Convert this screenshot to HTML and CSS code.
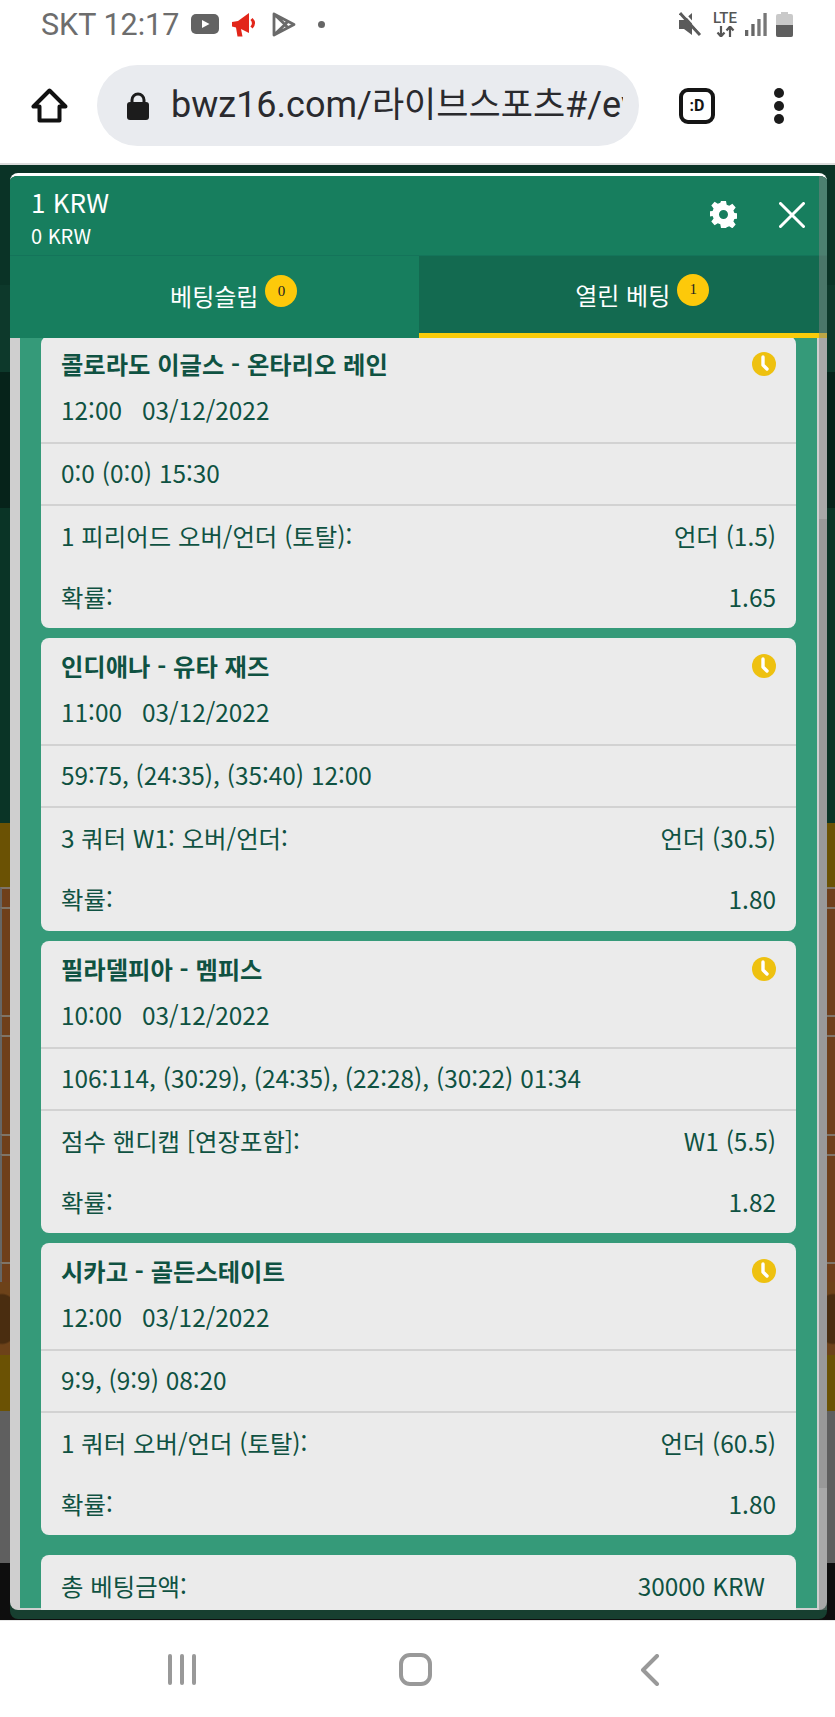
FILE: index.html
```html
<!DOCTYPE html>
<html lang="ko">
<head>
<meta charset="utf-8">
<title>bwz16</title>
<link rel="stylesheet" href="styles.css">
</head>
<body>
<header class="chrome">
  <div class="status">
    <span class="status-text">SKT 12:17</span>
    <svg class="ic-yt" width="28" height="20" viewBox="0 0 28 20"><rect width="28" height="20" rx="5" fill="#636363"/><path d="M11 6l7.500 4-7.500 4z" fill="#fff"/></svg>
    <svg class="ic-mega" width="25" height="24" viewBox="0 0 25 24"><path d="M0 9l6-1L17 0v20l-8-4 1.500 7.500H5.500L4 14.500 0 13.500z" fill="#e2261a"/><path d="M19.500 6q4 4 0 8.500" fill="none" stroke="#e2261a" stroke-width="3"/></svg>
    <svg class="ic-play" width="24" height="25" viewBox="0 0 24 25"><path d="M2 2l20 10.500L2 23zM2 2l11 10.500L2 23M16.500 8.500l-3.500 4 3.500 4" fill="none" stroke="#6a6a6a" stroke-width="2.800" stroke-linejoin="round"/></svg>
    <span class="dot"></span>
    <svg class="ic-mute" width="23" height="24" viewBox="0 0 23 24"><path d="M0 8h5l8-7v22l-8-6H0z" fill="#5a5a5a"/><path d="M1 1l20 22" stroke="#5a5a5a" stroke-width="3"/><path d="M4 0l19 21" stroke="#fff" stroke-width="2"/></svg>
    <span class="lte"><span class="lte-word">LTE</span><svg width="21" height="11" viewBox="0 0 21 11"><path d="M6 0v10M2.500 6.500L6 10.500l3.500-4M15 11V1M11.500 4.500L15 .5l3.500 4" fill="none" stroke="#555" stroke-width="2.200"/></svg></span>
    <svg class="ic-signal" width="22" height="23" viewBox="0 0 22 23"><rect x="0" y="17" width="3.300" height="6" fill="#666"/><rect x="6.300" y="11" width="3.300" height="12" fill="#666"/><rect x="12.300" y="6" width="3.300" height="17" fill="#777"/><rect x="18.400" y="0" width="3.300" height="23" fill="#777"/></svg>
    <svg class="ic-batt" width="17" height="25" viewBox="0 0 17 25"><path d="M5 0h7v2h3q2 0 2 2v19q0 2-2 2H2q-2 0-2-2V4q0-2 2-2h3z" fill="#c9c9c9"/><path d="M0 13h17v10q0 2-2 2H2q-2 0-2-2z" fill="#5e5e5e"/></svg>
  </div>
  <div class="toolbar">
    <svg class="ic-home" width="37" height="35" viewBox="0 0 37 35"><path d="M18.500 2.500L2.500 18.500h6v14h20v-14h6z" fill="none" stroke="#111" stroke-width="4" stroke-linejoin="round"/></svg>
    <div class="url">
      <svg width="22" height="28" viewBox="0 0 22 28"><path d="M5 12V8a6 6 0 0 1 12 0v4" fill="none" stroke="#1c1c1c" stroke-width="3"/><rect y="10" width="22" height="18" rx="3" fill="#1c1c1c"/></svg>
      <span class="url-text">bwz16.com/<span class="url-ko">라이브스포츠</span>#/ev</span>
    </div>
    <span class="tabs-count">:D</span>
    <span class="kebab"><i></i><i></i><i></i></span>
  </div>
</header>

<main class="stage">
  <div class="backdrop">
    <div class="band b-a"></div>
    <div class="band b-b"></div>
    <div class="band b-c"></div>
    <div class="band b-d"></div>
    <div class="band b-gold"></div>
    <div class="brown-row short"></div>
    <div class="brown-row tall"></div>
    <div class="brown-row short"></div>
    <div class="brown-row mid"></div>
    <div class="brown-row short"></div>
    <div class="brown-row tall"></div>
    <div class="brown-row short"></div>
    <div class="band b-blob"></div>
    <div class="band b-gold2"></div>
    <div class="band b-gray"></div>
    <div class="band b-black"></div>
  </div>

  <section class="panel">
    <div class="panel-head">
      <div class="amounts">
        <div class="amount-main">1 KRW</div>
        <div class="amount-sub">0 KRW</div>
      </div>
      <svg class="ic-gear" width="27" height="27" viewBox="0 0 27 27"><path fill="#fff" fill-rule="evenodd" d="M11 0h5l.7 3.700 2.500 1 3.200-2 3.300 3.700-2.300 3 1 2.500 3.600.6v5l-3.600.6-1 2.500 2.300 3-3.300 3.700-3.200-2-2.500 1L16 27h-5l-.7-3.700-2.500-1-3.200 2-3.300-3.700 2.300-3-1-2.500L-1 15.500v-5l3.600-.6 1-2.500-2.300-3 3.300-3.700 3.200 2 2.500-1zM13.500 9a4.500 4.500 0 1 0 0 9 4.500 4.500 0 0 0 0-9z"/></svg>
      <svg class="ic-close" width="26" height="26" viewBox="0 0 26 26"><path d="M1.500 1.500l23 23M24.500 1.500l-23 23" stroke="#fff" stroke-width="3" stroke-linecap="round"/></svg>
    </div>
    <div class="tabs">
      <div class="tab"><span class="tab-label">베팅슬립<span class="badge">0</span></span></div>
      <div class="tab active"><span class="tab-label">열린 베팅<span class="badge">1</span></span></div>
    </div>
    <div class="scroll">
      <div class="list">
        <article class="card">
          <div class="card-head">
            <div class="title-row"><span class="title">콜로라도 이글스 - 온타리오 레인</span><svg class="clock" width="24" height="24" viewBox="0 0 24 24"><circle cx="12" cy="12" r="12" fill="#eec110"/><path d="M11 5v8l4 4" fill="none" stroke="#fff" stroke-width="3.400" stroke-linecap="round" stroke-linejoin="round"/></svg></div>
            <div class="when"><span>12:00</span><span>03/12/2022</span></div>
          </div>
          <div class="score">0:0 (0:0) 15:30</div>
          <div class="bet">
            <div class="line"><span>1 피리어드 오버/언더 (토탈):</span><span>언더 (1.5)</span></div>
            <div class="line"><span>확률:</span><span>1.65</span></div>
          </div>
        </article>
        <article class="card">
          <div class="card-head">
            <div class="title-row"><span class="title">인디애나 - 유타 재즈</span><svg class="clock" width="24" height="24" viewBox="0 0 24 24"><circle cx="12" cy="12" r="12" fill="#eec110"/><path d="M11 5v8l4 4" fill="none" stroke="#fff" stroke-width="3.400" stroke-linecap="round" stroke-linejoin="round"/></svg></div>
            <div class="when"><span>11:00</span><span>03/12/2022</span></div>
          </div>
          <div class="score">59:75, (24:35), (35:40) 12:00</div>
          <div class="bet">
            <div class="line"><span>3 쿼터 W1: 오버/언더:</span><span>언더 (30.5)</span></div>
            <div class="line"><span>확률:</span><span>1.80</span></div>
          </div>
        </article>
        <article class="card">
          <div class="card-head">
            <div class="title-row"><span class="title">필라델피아 - 멤피스</span><svg class="clock" width="24" height="24" viewBox="0 0 24 24"><circle cx="12" cy="12" r="12" fill="#eec110"/><path d="M11 5v8l4 4" fill="none" stroke="#fff" stroke-width="3.400" stroke-linecap="round" stroke-linejoin="round"/></svg></div>
            <div class="when"><span>10:00</span><span>03/12/2022</span></div>
          </div>
          <div class="score">106:114, (30:29), (24:35), (22:28), (30:22) 01:34</div>
          <div class="bet">
            <div class="line"><span>점수 핸디캡 [연장포함]:</span><span>W1 (5.5)</span></div>
            <div class="line"><span>확률:</span><span>1.82</span></div>
          </div>
        </article>
        <article class="card">
          <div class="card-head">
            <div class="title-row"><span class="title">시카고 - 골든스테이트</span><svg class="clock" width="24" height="24" viewBox="0 0 24 24"><circle cx="12" cy="12" r="12" fill="#eec110"/><path d="M11 5v8l4 4" fill="none" stroke="#fff" stroke-width="3.400" stroke-linecap="round" stroke-linejoin="round"/></svg></div>
            <div class="when"><span>12:00</span><span>03/12/2022</span></div>
          </div>
          <div class="score">9:9, (9:9) 08:20</div>
          <div class="bet">
            <div class="line"><span>1 쿼터 오버/언더 (토탈):</span><span>언더 (60.5)</span></div>
            <div class="line"><span>확률:</span><span>1.80</span></div>
          </div>
        </article>
        <div class="summary">
          <div class="line"><span>총 베팅금액:</span><span>30000 KRW</span></div>
        </div>
      </div>
    </div>
    <div class="scrollbar"><div class="thumb"></div></div>
  </section>
</main>

<footer class="nav">
  <span class="nav-recent"><i></i><i></i><i></i></span>
  <span class="nav-home"></span>
  <svg class="nav-back" width="20" height="32" viewBox="0 0 20 32"><path d="M17 2L3 16l14 14" fill="none" stroke="#999" stroke-width="4" stroke-linecap="round" stroke-linejoin="round"/></svg>
</footer>
</body>
</html>
```
FILE: styles.css
```css
* { box-sizing: border-box; }
html, body { margin: 0; padding: 0; }
body {
  width: 835px;
  height: 1717px;
  overflow: hidden;
  background: #fff;
  font-family: "Noto Sans CJK KR", "Noto Sans", sans-serif;
}

/* browser chrome */
.chrome { height: 165px; background: #fff; border-bottom: 2px solid #dcdcdc; }
.status { height: 65px; display: flex; align-items: flex-start; padding: 12px 42px 0 41px; }
.status-text { font: 400 30.500px/26px Roboto, sans-serif; color: #6d6d6d; width: 137px; white-space: nowrap; }
.ic-yt { margin: 2px 0 0 13px; }
.ic-mega { margin: 1px 0 0 13px; }
.ic-play { margin: 0 0 0 15px; }
.dot { width: 7px; height: 7px; border-radius: 50%; background: #666; margin: 9px 0 0 22px; }
.ic-mute { margin: 0 0 0 auto; }
.lte { width: 24px; margin-left: 11px; display: flex; flex-direction: column; align-items: center; }
.lte-word { font: 500 15px/13px Roboto, sans-serif; color: #555; }
.lte svg { margin-top: 1px; }
.ic-signal { margin: 1px 0 0 8px; }
.ic-batt { margin: 0 0 0 9px; }

.toolbar { height: 81px; display: flex; align-items: center; padding-left: 31px; }
.ic-home { flex: none; margin-top: -1px; }
.url {
  width: 542px; height: 81px; margin-left: 29px; padding: 0 16px 0 30px;
  border-radius: 41px; background: #e9ebef;
  display: flex; align-items: center; gap: 22px;
}
.url svg { flex: none; }
.url-text {
  flex: 1; overflow: hidden; white-space: nowrap;
  font: 400 36px/44px Roboto, "Noto Sans CJK KR", sans-serif; color: #2a2a2e;
}
.url-ko { font-size: 35px; }
.tabs-count {
  width: 36px; height: 36px; margin-left: 40px; border: 4px solid #151515; border-radius: 9px;
  display: flex; align-items: center; justify-content: center;
  font: 700 16px/1 Roboto, sans-serif; color: #151515;
}
.kebab { margin-left: 59px; display: flex; flex-direction: column; gap: 3px; }
.kebab i { width: 10px; height: 10px; border-radius: 50%; background: #1b1b1b; display: block; }

/* page behind the sheet */
.stage { position: relative; height: 1455px; }
.backdrop { height: 100%; display: flex; flex-direction: column; background: #0e0e0e; }
.band { flex: none; }
.b-a { height: 120px; background: #0a3326; }
.b-b { height: 87px; background: #0d392b; }
.b-c { height: 136px; background: #06231a; }
.b-d { height: 315px; background: #0a3426; }
.b-gold { height: 64px; background: #6b5204; }
.brown-row { flex: none; background: #6f3f1b; border-top: 2px solid #7f7468; border-left: 2px solid #666; }
.brown-row.short { height: 20px; }
.brown-row.tall { height: 108px; }
.brown-row.mid { height: 99px; }
.b-blob {
  height: 73px;
  background:
    radial-gradient(ellipse 18px 26px at 2px 37px, #4a2d10 92%, transparent),
    radial-gradient(ellipse 18px 26px at 833px 37px, #4a2d10 92%, transparent),
    #6d4219;
}
.b-gold2 { height: 56px; background: #6b5204; }
.b-gray { height: 152px; background: #5f5f5f; }
.b-black { height: 55px; background: #0e0e0e; }

/* bet sheet */
.panel {
  position: absolute; left: 10px; top: 8px; width: 817px; height: 1446px;
  display: flex; flex-direction: column; overflow: hidden;
  background: #173f30; border-top: 3px solid #fff;
  border-radius: 8px;
}
.panel-head {
  height: 80px; flex: none; display: flex; align-items: center;
  background: #177e5e; border-bottom: 1px solid #14745a; padding-left: 21px; position: relative;
  color: #fff;
}
.amounts { flex: 1; }
.amount-main { font-size: 26px; line-height: 32px; margin-top: 4px; }
.amount-sub { font-size: 20px; line-height: 28px; margin-top: 4px; }
.ic-gear { flex: none; margin: -2px 0 0; }
.ic-close { flex: none; margin: -2px 22px 0 42px; }

.tabs { height: 82px; flex: none; display: flex; }
.tab {
  width: 50%; background: #177e5e; color: #fff;
  display: flex; align-items: center; justify-content: center;
  font-size: 24px; line-height: 30px; padding-bottom: 2px;
}
.tab.active { background: #136a50; border-bottom: 5px solid #f9cc0b; padding-bottom: 0; }
.tab-label { position: relative; }
.badge {
  position: absolute; left: calc(100% + 7px); top: -6px;
  width: 32px; height: 32px; border-radius: 50%; background: #fdc90a;
  display: flex; align-items: center; justify-content: center;
  font: 400 15px/1 "Liberation Serif", serif; color: #222;
}

.scroll {
  height: 1272px; flex: none; overflow: hidden;
  background: #cfcfcf; padding: 0 10px;
  border-radius: 0 0 8px 8px;
}
.list { height: 100%; background: #359a79; padding: 0 21px; }
.card {
  height: 292.3px; margin-bottom: 10px; border-radius: 8px; background: #ebebeb;
  color: #0f5242; font-size: 24.400px; line-height: 30px;
}
.card:first-child { margin-top: -2px; }
.card-head { height: 106px; padding: 13px 20px 0; }
.title-row { display: flex; justify-content: space-between; align-items: center; }
.title { font-weight: 700; font-size: 24.300px; }
.clock { flex: none; }
.when { margin-top: 16px; display: flex; gap: 20px; }
.score { height: 64px; padding: 14px 20px 0; border-top: 2px solid #d2d2d2; border-bottom: 2px solid #d2d2d2; white-space: nowrap; }
.bet { padding: 15px 20px 0; display: flex; flex-direction: column; gap: 31px; }
.line { display: flex; justify-content: space-between; white-space: nowrap; }
.summary {
  height: 120px; margin-top: 20px; padding: 16px 31px 0 20px; border-radius: 8px; background: #ebebeb;
  color: #0f5242; font-size: 24.400px; line-height: 30px;
}

.scrollbar {
  position: absolute; right: 0; top: 0; width: 8px; height: 1434px;
  background: rgba(130, 130, 130, .5);
}
.thumb { position: absolute; left: 0; top: 343px; width: 100%; height: 969px; background: #999; }

/* Android nav bar */
.nav {
  height: 97px; background: #fff; border-top: 1px solid #e6e6e6;
  display: flex; align-items: flex-start; position: relative;
  padding: 33px 0 0 168px;
}
.nav-recent { display: flex; gap: 8px; }
.nav-recent i { display: block; width: 4px; height: 31px; border-radius: 2px; background: #999; }
.nav-home {
  width: 33px; height: 33px; margin-left: 203px; margin-top: -1px;
  border: 4px solid #999; border-radius: 11px;
}
.nav-back { margin-left: 208px; }
```
